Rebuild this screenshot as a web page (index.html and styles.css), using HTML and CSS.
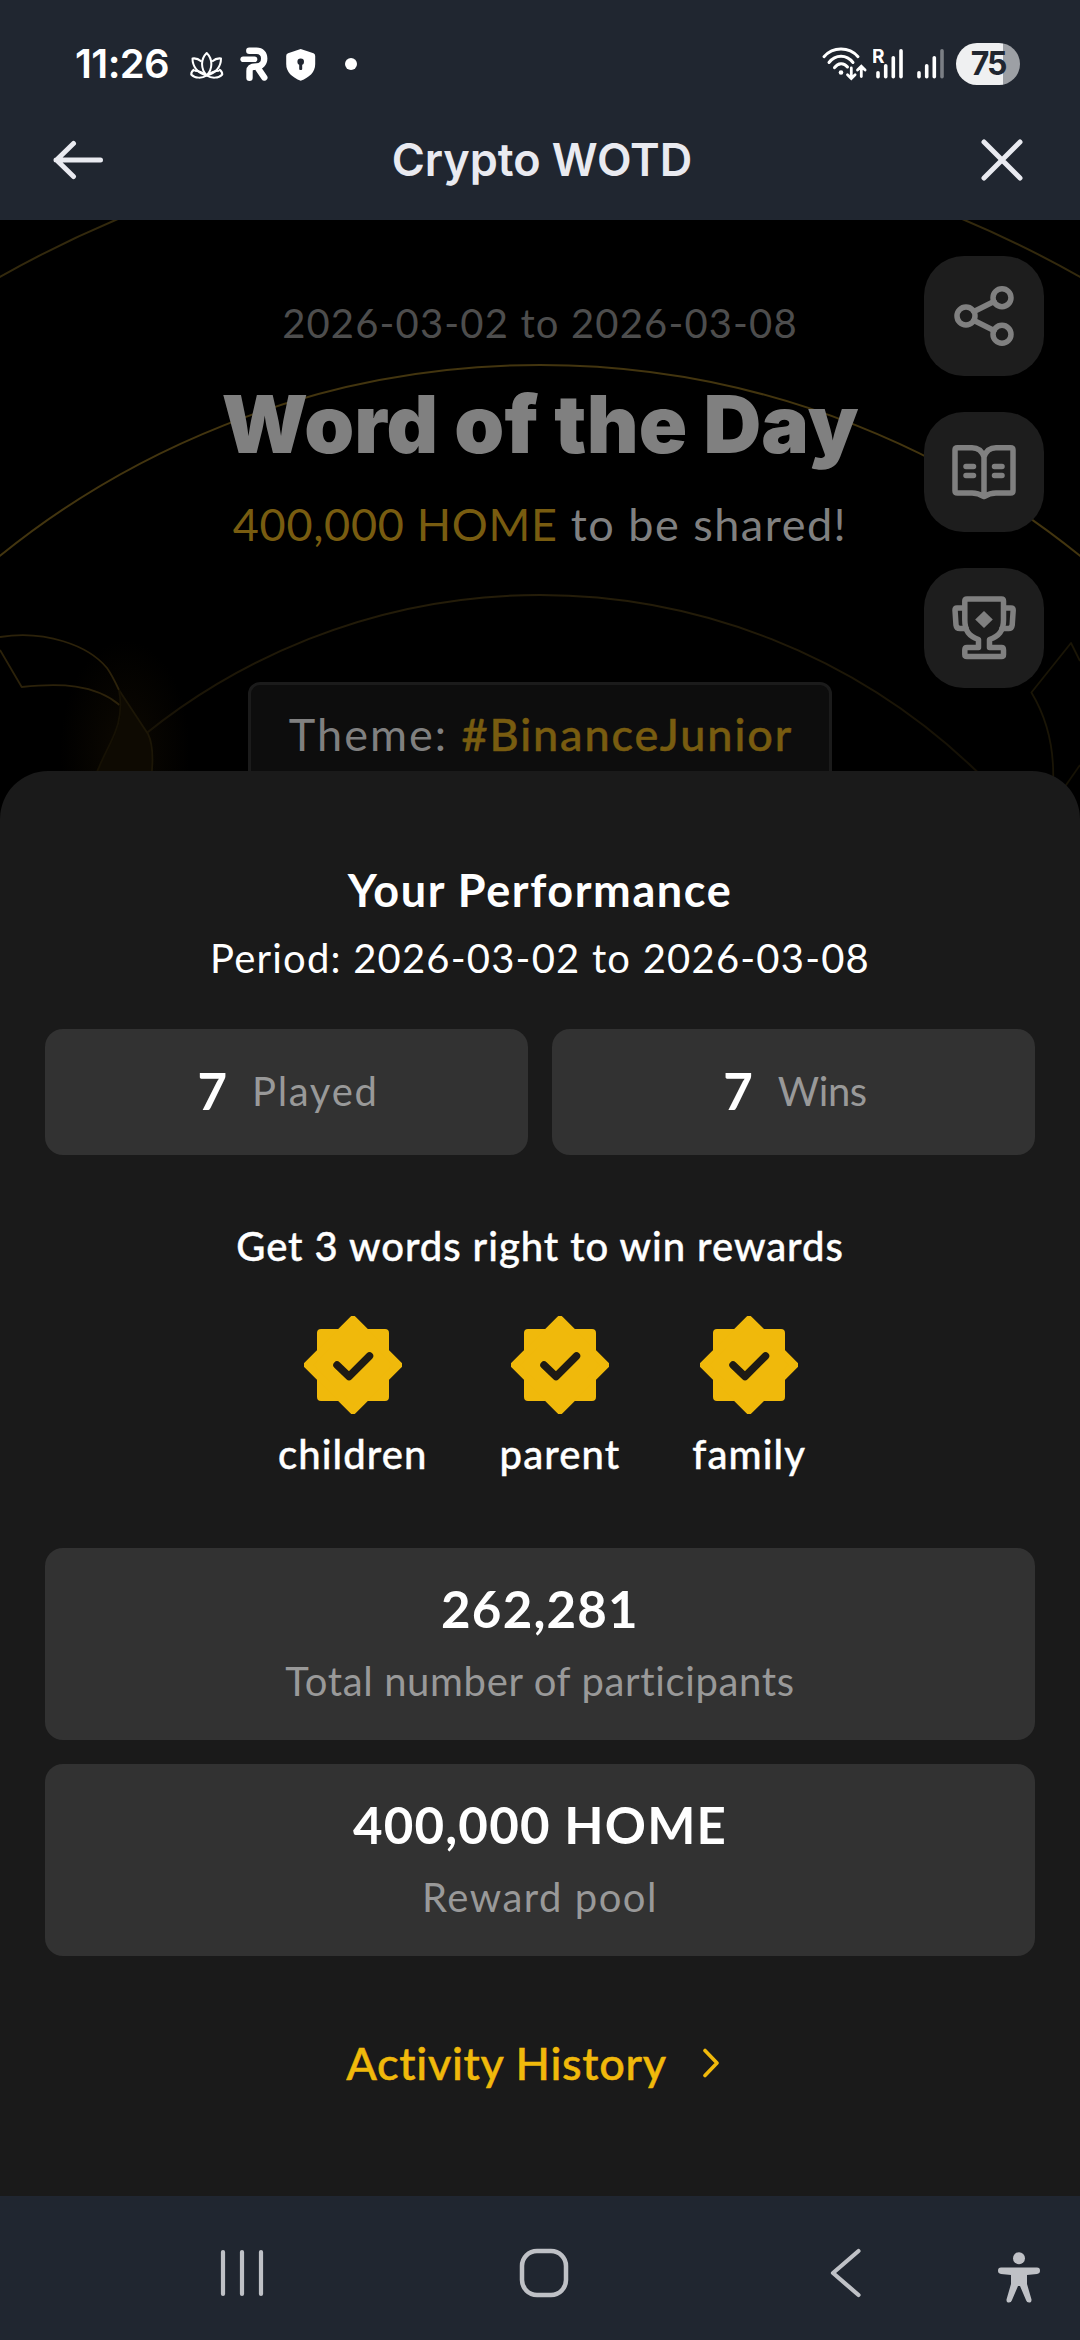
FILE: index.html
```html
<!DOCTYPE html>
<html lang="en">
<head>
	<meta charset="UTF-8">
	<title>Crypto WOTD</title>
	<link rel="stylesheet" href="styles.css">
</head>
<body>
	<!-- status bar -->
	<div class="status">
		<span class="time">11:26</span>
		<svg class="lotus" width="34" height="36" viewBox="0 0 34 36" fill="none" stroke="#fff" stroke-width="2" stroke-linejoin="round">
			<path d="M16.7 7C10.5 13 10.5 23 16.7 29.5C22.900 23 22.900 13 16.700 7Z"/>
			<path d="M11.500 15.500C8.500 13 5.500 12 2.500 12.500C2.500 20 7 27 16.500 29.500M22 15.500C25 13 28 12 31 12.500C31 20 26.500 27 17 29.500"/>
			<path d="M4.500 23.500C2.500 24.500 1.200 26 1.200 28.500C5 32.500 12 32.500 16.700 29.500C12 26 8 24.800 4.500 24.800M29 23.500C31 24.500 32.300 26 32.300 28.500C28.500 32.500 21.500 32.500 16.700 29.500C21.500 26 25.500 24.800 29 24.800"/>
		</svg>
		<svg class="rapp" width="29" height="36" viewBox="0 0 29 36" fill="none" stroke="#fff" stroke-width="6.400" stroke-linecap="round" stroke-linejoin="round">
			<path d="M9.300 4.700H16.500C21.500 4.700 24.200 7.800 24.200 12.500C24.200 17 21 20.500 16.500 20.500C12 20.500 9.500 21.500 9.500 25V31.700M17.500 21.500L24.300 31.500"/>
			<path d="M3.200 13.300H14.500" stroke-width="5.600"/>
		</svg>
		<svg class="shield" width="30" height="36" viewBox="0 0 30 36">
			<path d="M14.700 3L27.500 7.300Q29.200 8 29.200 10V18C29.200 26 23.500 31.500 14.700 34.700C6 31.500 .2 26 .2 18V10Q.2 8 2 7.300Z" fill="#fff"/>
			<circle cx="14.700" cy="15.700" r="3.300" fill="#202630"/>
			<rect x="13.200" y="16" width="3" height="8" rx="1" fill="#202630"/>
		</svg>
		<i class="dot"></i>
		<svg class="wifi" width="48" height="36" viewBox="0 0 48 36" fill="none" stroke="#fff" stroke-width="3" stroke-linecap="round">
			<path d="M4 10.700C13 .5 29 .5 38 10.700M9 16.500C15.500 8.200 26.500 8.200 33 16.500M14.500 21.700C18 16.500 24 16.500 27.500 21"/>
			<circle cx="21" cy="26.500" r="2.300" fill="#fff" stroke="none"/>
			<path d="M31.300 22V32M27.500 28.800L31.300 32.500L35.100 28.800M41.300 30.500V21M37.500 24L41.300 20.300L45.100 24" stroke-width="2.800"/>
		</svg>
		<svg class="sig" width="31" height="36" viewBox="0 0 31 36" fill="#fff">
			<text class="roam" x="-1" y="17">R</text>
			<rect x="3.200" y="25" width="3.600" height="7.500" rx="1.800"/>
			<rect x="10.900" y="18" width="3.600" height="14.500" rx="1.800"/>
			<rect x="18.500" y="10" width="3.600" height="22.500" rx="1.800"/>
			<rect x="26.200" y="3" width="3.600" height="29.500" rx="1.800"/>
		</svg>
		<svg class="sig2" width="28" height="36" viewBox="0 0 28 36" fill="#fff">
			<rect x=".2" y="25" width="3.600" height="7.500" rx="1.800"/>
			<rect x="7.900" y="18" width="3.600" height="14.500" rx="1.800"/>
			<rect x="15.500" y="10" width="3.600" height="22.500" rx="1.800"/>
			<rect x="23.200" y="3" width="3.600" height="29.500" rx="1.800" fill="#7b7f85"/>
		</svg>
		<span class="battery">75</span>
	</div>

	<!-- app bar -->
	<div class="bar">
		<svg width="50" height="40" viewBox="0 0 50 40" fill="none" stroke="#e9eaf0" stroke-width="5" stroke-linecap="round" stroke-linejoin="round">
			<path d="M47.500 20H3M20.500 3.500L3.500 20L20.500 36.500"/>
		</svg>
		<h1>Crypto WOTD</h1>
		<svg width="42" height="42" viewBox="0 0 42 42" fill="none" stroke="#e9eaf0" stroke-width="5" stroke-linecap="round">
			<path d="M3 3L39 39M39 3L3 39"/>
		</svg>
	</div>

	<!-- dimmed page behind the sheet -->
	<div class="hero">
		<svg class="lines" width="1080" height="600" viewBox="0 220 1080 600" fill="none">
			<defs>
				<linearGradient id="g2" x1="0" x2="0" y1="0" y2="1"><stop offset="0" stop-color="#251d09"/><stop offset=".2" stop-color="#0d0a03"/></linearGradient>
				<radialGradient id="g3"><stop offset="0" stop-color="#120c02"/><stop offset="1" stop-color="#000"/></radialGradient>
			</defs>
			<ellipse cx="125" cy="750" rx="65" ry="110" fill="url(#g3)" opacity=".7"/>
			<circle cx="540" cy="1224" r="1090" stroke="#33290d" stroke-width="2"/>
			<circle cx="540" cy="1224" r="859" stroke="#43350f" stroke-width="2"/>
			<circle cx="540" cy="1224" r="629" stroke="url(#g2)" stroke-width="2"/>
			<path d="M119 690L148 734Q156 748 151 780H92C104 752 128 728 119 690Z" fill="#0e0a02"/>
			<g stroke="#2c220a" stroke-width="1.800" stroke-linejoin="round">
				<path d="M0 637C45 630 88 645 107 668Q112 675 119 690"/>
				<path d="M0 650L21.700 687C60 683 95 684 119.500 705"/>
				<path d="M119 690L148 734Q155 748 151 780" stroke="#1c1606"/>
				<path d="M119 690C126 728 106 745 96 775" stroke="#161104"/>
				<path d="M1080 661L1071 643L1031.400 692.500C1045 715 1055 745 1053 785" stroke="#1a1506"/>
				<path d="M1080 765L1064 788" stroke="#161205"/>
			</g>
		</svg>
		<div class="date">2026-03-02 to 2026-03-08</div>
		<h2>Word of the Day</h2>
		<div class="prize"><span>400,000 HOME</span> to be shared!</div>
		<div class="theme">Theme: <b>#BinanceJunior</b></div>
		<div class="side">
			<div class="btn">
				<svg width="120" height="120" viewBox="0 0 120 120">
					<path d="M50 55.500L70 45.500M50 64.500L70 74.500"/>
					<circle cx="42" cy="60" r="9"/>
					<circle cx="78" cy="41.700" r="9"/>
					<circle cx="78" cy="78.300" r="9"/>
				</svg>
			</div>
			<div class="btn">
				<svg width="120" height="120" viewBox="0 0 120 120">
					<path d="M60 45Q57 35.700 48 35.700H33.500Q31 35.700 31 38V79Q31 81 33.500 81H48Q54 81 60 84.500Q66 81 72 81H86.500Q89 81 89 79V38Q89 35.700 86.500 35.700H72Q63 35.700 60 45V84"/>
					<path d="M42 54.500H49.500M42 63.500H49.500M70.500 54.500H78M70.500 63.500H78"/>
				</svg>
			</div>
			<div class="btn">
				<svg width="120" height="120" viewBox="0 0 120 120">
					<path d="M40.800 33Q40.800 31 43 31H77.500Q79.500 31 79.500 33V52C79.500 63 75 68 65.500 71.500V79.500H77.500Q79.500 79.500 79.500 82V86.500Q79.500 88.500 77.500 88.500H43Q40.800 88.500 40.800 86.500V82Q40.800 79.500 43 79.500H54.500V71.500C45 68 40.800 63 40.800 52Z"/>
					<path d="M40 40H33Q31 40 31 42L32 57Q32.500 60.500 36 60.500H42M80.500 40H87Q89.200 40 89.200 42L88.200 57Q87.700 60.500 84.500 60.500H78"/>
					<path d="M60 43L68.800 51.500L60 60L51.200 51.500Z" fill="#808080" stroke="none"/>
				</svg>
			</div>
		</div>
	</div>

	<!-- performance sheet -->
	<div class="sheet">
		<h3>Your Performance</h3>
		<div class="period">Period: 2026-03-02 to 2026-03-08</div>
		<div class="stats">
			<div class="stat"><b>7</b><span>Played</span></div>
			<div class="stat"><b>7</b><span class="wins">Wins</span></div>
		</div>
		<div class="tip">Get 3 words right to win rewards</div>
		<div class="words">
			<div class="word">
				<svg width="98" height="98" viewBox="0 0 98 98"><use href="#badge"/></svg>
				<span>children</span>
			</div>
			<div class="word">
				<svg width="98" height="98" viewBox="0 0 98 98"><use href="#badge"/></svg>
				<span>parent</span>
			</div>
			<div class="word">
				<svg width="98" height="98" viewBox="0 0 98 98"><use href="#badge"/></svg>
				<span>family</span>
			</div>
		</div>
		<div class="total"><b>262,281</b><span>Total number of participants</span></div>
		<div class="total"><b>400,000 HOME</b><span class="pool">Reward pool</span></div>
		<div class="history">
			<span>Activity History</span>
			<svg width="18" height="30" viewBox="0 0 18 30" fill="none" stroke="#f0b90b" stroke-width="3.600" stroke-linecap="round" stroke-linejoin="round"><path d="M3 2.500L15 15L3 27.500"/></svg>
		</div>
	</div>

	<!-- android navigation -->
	<div class="nav">
		<svg class="recent" width="44" height="50" viewBox="0 0 44 50" fill="none" stroke="#bfc1c6" stroke-width="4.200" stroke-linecap="round"><path d="M3 4V46M22 4V46M41 4V46"/></svg>
		<svg class="home" width="50" height="50" viewBox="0 0 50 50" fill="none" stroke="#bfc1c6" stroke-width="4.500"><rect x="3" y="3" width="44" height="44" rx="15"/></svg>
		<svg class="back" width="32" height="50" viewBox="0 0 32 50" fill="none" stroke="#bfc1c6" stroke-width="4.200" stroke-linecap="round" stroke-linejoin="round"><path d="M28.500 3L3 25L28.500 47"/></svg>
		<svg class="access" width="42" height="52" viewBox="0 0 42 52" fill="#bfc1c6">
			<circle cx="21" cy="7.200" r="6"/>
			<path d="M3 16.500H39Q42 16.500 42 19.700Q42 22.500 39 22.900L29 24V33L33.500 48.500Q33.700 51.500 31 51.500Q28.800 51.500 28.200 49.500L22 35H20L13.800 49.500Q13.200 51.500 11 51.500Q8.300 51.500 8.500 48.500L13 33V24L3 22.900Q0 22.500 0 19.700Q0 16.500 3 16.500Z"/>
		</svg>
	</div>

	<svg class="defs" width="0" height="0">
		<symbol id="badge" viewBox="0 0 98 98">
			<g fill="#f0b90b" stroke="#f0b90b" stroke-width="8" stroke-linejoin="round">
				<rect x="17" y="17" width="64" height="64"/>
				<rect x="17" y="17" width="64" height="64" transform="rotate(45 49 49)"/>
			</g>
			<path d="M33 49L45 60.500L65.500 40" fill="none" stroke="#1e1a14" stroke-width="7.500" stroke-linecap="round" stroke-linejoin="round"/>
		</symbol>
	</svg>
</body>
</html>
```
FILE: styles.css
```css
body{margin: 0;width: 1080px;height: 2340px;overflow: hidden;background: #000;color: #fff;font-family: Lato, "Liberation Sans", sans-serif;}
h1,h2,h3{margin: 0;}
svg{display: block;flex: none;}
.defs{position: absolute;}

/* status bar */
.status{display: flex;align-items: center;height: 128px;padding: 0 60px 0 75px;box-sizing: border-box;background: #202630;}
.time{width: 115px;font: 600 40px/48px Inter, sans-serif;letter-spacing: -.6px;}
.rapp{margin-left: 16px;}
.shield{margin-left: 17px;}
.dot{width: 12px;height: 12px;margin-left: 29px;border-radius: 50%;background: #fff;}
.wifi{margin-left: auto;}
.sig{margin-left: 5px;}
.sig2{margin-left: 13px;}
.roam{font: 700 19px Inter, sans-serif;}
.battery{width: 64px;height: 42px;margin-left: 11px;border-radius: 21px;background: linear-gradient(90deg, #eff0f1 47px, #9da0a5 47px);color: #202630;font: 700 32px/42px Inter, sans-serif;letter-spacing: -2px;text-align: center;}

/* app bar */
.bar{display: flex;align-items: center;justify-content: space-between;height: 92px;padding: 0 57px 16px 53px;box-sizing: border-box;background: #202630;}
.bar svg{margin-bottom: 12px;}
.bar h1{margin: 0 0 12px;color: #e9eaf0;font: 600 45px/64px Inter, sans-serif;letter-spacing: -.05px;}

/* hero */
.hero{position: relative;height: 600px;padding-top: 76px;box-sizing: border-box;overflow: hidden;background: #000;color: #808080;text-align: center;}
.lines{position: absolute;left: 0;top: 0;}
.date,.hero h2,.prize,.theme{position: relative;}
.date{font-size: 40px;line-height: 54px;letter-spacing: 1.150px;color: #4d4d4d;}
.hero h2{margin-top: 26px;font: 900 80px/96px Inter, sans-serif;letter-spacing: .100px;}
.prize{margin-top: 22px;font-size: 45px;line-height: 60px;letter-spacing: 1.500px;}
.prize span{color: #785c10;letter-spacing: .7px;}
.theme{width: 584px;height: 160px;margin: 128px auto 0;padding: 19px 0 0 2px;box-sizing: border-box;border: 3px solid #1b1b1b;border-radius: 12px;background: #0d0d0d;font-size: 45px;line-height: 60px;letter-spacing: 2px;}
.theme b{color: #785c10;font-weight: 500;letter-spacing: 1.900px;-webkit-text-stroke: .5px #785c10;}
.side{position: absolute;right: 36px;top: 36px;display: flex;flex-direction: column;gap: 36px;}
.btn{width: 120px;height: 120px;border-radius: 40px;background: #1d1d1d;}
.btn svg{fill: none;stroke: #808080;stroke-width: 5.500px;stroke-linecap: round;stroke-linejoin: round;}

/* sheet */
.sheet{position: relative;height: 1425px;margin-top: -49px;padding: 89px 45px 0;box-sizing: border-box;border-radius: 48px 48px 0 0;background: #1a1a1a;text-align: center;}
.sheet h3{font-size: 45px;font-weight: 700;line-height: 60px;letter-spacing: 1.600px;}
.period{margin-top: 11px;font-size: 40px;line-height: 54px;letter-spacing: 1.200px;}
.stats{display: flex;gap: 24px;margin-top: 44px;}
.stat{display: flex;flex: 1;align-items: center;justify-content: center;gap: 25px;height: 126px;padding: 0 0 3px 3px;box-sizing: border-box;border-radius: 18px;background: #323232;}
.stat b{font-size: 51px;}
.stat span{font-size: 40px;letter-spacing: 1.700px;color: #999;}
.stat .wins{letter-spacing: -.4px;}
.tip{margin-top: 64px;font-size: 40px;font-weight: 500;line-height: 54px;letter-spacing: .950px;-webkit-text-stroke: .4px #fff;}
.words{display: flex;justify-content: center;gap: 72px;margin-top: 43px;padding-left: 4px;}
.word{display: flex;flex-direction: column;align-items: center;gap: 13px;}
.word span{font-size: 40px;font-weight: 500;line-height: 54px;letter-spacing: 1.100px;-webkit-text-stroke: .4px #fff;}
.total{display: flex;flex-direction: column;align-items: center;height: 192px;margin-top: 24px;padding-top: 29px;box-sizing: border-box;border-radius: 18px;background: #323232;}
.words + .total{margin-top: 67px;}
.total b{font-size: 51px;line-height: 64px;letter-spacing: 1.200px;}
.total span{margin-top: 13px;font-size: 40px;line-height: 54px;letter-spacing: .650px;color: #999;}
.total .pool{letter-spacing: 1.500px;}
.history{display: flex;align-items: center;justify-content: center;gap: 35px;margin-top: 77px;padding-right: 14px;color: #f0b90b;}
.history span{font-size: 45px;font-weight: 500;line-height: 60px;letter-spacing: .700px;-webkit-text-stroke: .5px #f0b90b;}

/* navigation */
.nav{display: flex;height: 144px;padding: 52px 0 0 220px;box-sizing: border-box;background: #202630;}
.home{margin-left: 255px;}
.back{margin-left: 261px;}
.access{margin: 3px 0 0 136px;}
```
